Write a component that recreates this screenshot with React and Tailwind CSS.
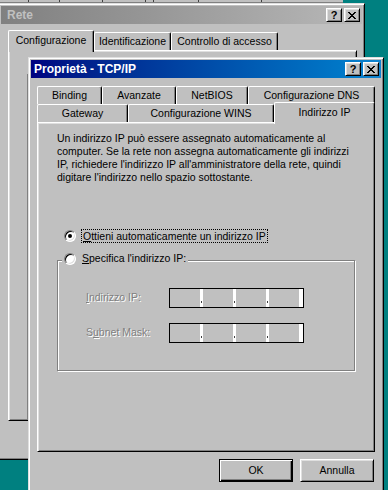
import React from 'react';

// Win98 bevels
const raised = 'border border-t-white border-l-white border-r-black border-b-black shadow-[inset_1px_1px_0_#dfdfdf,inset_-1px_-1px_0_#808080]';
const frame = 'border border-t-[#dfdfdf] border-l-[#dfdfdf] border-r-black border-b-black shadow-[inset_1px_1px_0_#fff,inset_-1px_-1px_0_#808080]';
const panel = 'border border-t-white border-l-white border-r-black border-b-black shadow-[inset_1px_1px_0_#dfdfdf,inset_-1px_-1px_0_#808080]';
const disabled = 'text-[#808080] [text-shadow:1px_1px_0_#fff]';

function CloseGlyph() {
  return (
    <svg width="8" height="7" viewBox="0 0 8 7" shapeRendering="crispEdges">
      <path
        fill="#000"
        d="M0 0h2v1H0zM6 0h2v1H6zM1 1h2v1H1zM5 1h2v1H5zM2 2h4v1H2zM3 3h2v1H3zM2 4h4v1H2zM1 5h2v1H1zM5 5h2v1H5zM0 6h2v1H0zM6 6h2v1H6z"
      />
    </svg>
  );
}

function TitleButtons() {
  return (
    <div className="flex gap-[2px] pr-[2px]">
      <div className={`w-[16px] h-[14px] bg-[#c0c0c0] ${raised} flex items-center justify-center text-[11px] font-bold leading-none text-black`}>?</div>
      <div className={`w-[16px] h-[14px] bg-[#c0c0c0] ${raised} flex items-center justify-center`}>
        <CloseGlyph />
      </div>
    </div>
  );
}

function Tab({ label, w, selected }) {
  if (selected) {
    return (
      <div
        className={`${w} h-[22px] -mb-[2px] relative z-10 bg-[#c0c0c0] border-t border-l border-white border-r border-r-black rounded-t-[2px] shadow-[inset_-1px_0_0_#808080] flex items-center justify-center pb-[2px]`}
      >
        {label}
      </div>
    );
  }
  return (
    <div
      className={`${w} h-[18px] bg-[#c0c0c0] border-t border-l border-white border-r border-r-black rounded-t-[2px] shadow-[inset_-1px_0_0_#808080] flex items-center justify-center`}
    >
      {label}
    </div>
  );
}

function Radio({ checked }) {
  return (
    <div className="w-[12px] h-[12px] rounded-full bg-white border border-t-[#808080] border-l-[#808080] border-r-white border-b-white shadow-[inset_1px_1px_0_#000,inset_-1px_-1px_0_#dfdfdf] flex items-center justify-center shrink-0">
      {checked && <div className="w-[4px] h-[4px] rounded-full bg-black" />}
    </div>
  );
}

function IpBox() {
  return (
    <div className="w-[135px] h-[20px] border border-black flex">
      {[30, 30, 30, 30].map((fw, i) => (
        <React.Fragment key={i}>
          <div style={{ width: fw }} className="h-full" />
          <div className={`${i === 3 ? 'w-[4px]' : 'w-[3px]'} h-full bg-white flex justify-center`}>
            {i < 3 && <div className="mt-[12px] w-[1px] h-[2px] bg-[#404040]" />}
          </div>
        </React.Fragment>
      ))}
    </div>
  );
}

export default function App() {
  return (
    <div className="relative w-[388px] h-[490px] overflow-hidden bg-[#008080] text-black font-['Liberation_Sans',Arial,sans-serif] text-[10.5px]">
      {/* bit of another window at the very top */}
      <div className="absolute left-0 top-0 w-[343px] h-[3px] bg-[#c0c0c0] border-b border-[#808080] flex">
        <div className="ml-[28px] w-[1px] h-full bg-[#404040]" />
        <div className="ml-[30px] w-[1px] h-full bg-[#404040]" />
        <div className="ml-[42px] w-[1px] h-full bg-[#404040]" />
        <div className="ml-[42px] w-[1px] h-full bg-[#404040]" />
        <div className="ml-[7px] w-[1px] h-full bg-[#404040]" />
        <div className="ml-[44px] w-[1px] h-full bg-[#404040]" />
        <div className="ml-[62px] w-[1px] h-full bg-[#404040]" />
      </div>

      {/* back window: Rete */}
      <div className={`absolute left-[-2px] top-[3px] w-[367px] h-[457px] bg-[#c0c0c0] ${frame} p-[2px]`}>
        <div className="h-[18px] bg-linear-to-r from-[#808080] to-[#b8b8b8] flex items-center justify-between">
          <span className="pl-[6px] text-[12px] font-bold text-[#c0c0c0]">Rete</span>
          <TitleButtons />
        </div>
        <div className="mt-[6px] pl-[7px] pr-[5px]">
          <div className="flex items-end h-[20px]">
            <Tab label="Configurazione" w="w-[86px]" selected />
            <Tab label="Identificazione" w="w-[77px]" />
            <Tab label="Controllo di accesso" w="w-[107px]" />
          </div>
          <div className={`h-[371px] ${panel} pl-[18px] pt-[23px] pb-[1px]`}>
            <div className="h-full border-l border-[#808080]" />
          </div>
        </div>
      </div>

      {/* front window: Proprietà - TCP/IP */}
      <div className={`absolute left-[28px] top-[57px] w-[356px] h-[445px] bg-[#c0c0c0] ${frame} p-[2px]`}>
        <div className="h-[18px] bg-linear-to-r from-[#000080] to-[#1084d0] flex items-center justify-between">
          <span className="pl-[3px] text-[12px] font-bold text-white">Proprietà - TCP/IP</span>
          <TitleButtons />
        </div>

        <div className="mt-[8px] px-[6px]">
          <div className="flex h-[18px]">
            <Tab label="Binding" w="w-[65px]" />
            <Tab label="Avanzate" w="w-[74px]" />
            <Tab label="NetBIOS" w="w-[72px]" />
            <Tab label="Configurazione DNS" w="w-[127px]" />
          </div>
          <div className="flex items-end h-[18px]">
            <Tab label="Gateway" w="w-[91px]" />
            <Tab label="Configurazione WINS" w="w-[146px]" />
            <Tab label="Indirizzo IP" w="w-[101px]" selected />
          </div>

          <div className={`h-[330px] ${panel} flex flex-col`}>
            <p className="pl-[19px] pt-[9px] leading-[13px] whitespace-nowrap">
              Un indirizzo IP può essere assegnato automaticamente al
              <br />
              computer. Se la rete non assegna automaticamente gli indirizzi
              <br />
              IP, richiedere l'indirizzo IP all'amministratore della rete, quindi
              <br />
              digitare l'indirizzo nello spazio sottostante.
            </p>

            <div className="mt-[45px] ml-[26px] h-[14px] flex items-center">
              <Radio checked />
              <span className="ml-[5px] px-[1px] border border-dotted border-black leading-[12px]">
                <u>O</u>ttieni automaticamente un indirizzo IP
              </span>
            </div>

            <div className="relative mt-[17px] mx-[19px] h-[111px] border border-[#808080] shadow-[1px_1px_0_#fff,inset_1px_1px_0_#fff] pt-[27px] pl-[28px] flex flex-col gap-[15px]">
              <div className="absolute left-[4px] top-[-9px] h-[14px] px-[2px] bg-[#c0c0c0] flex items-center">
                <Radio />
                <span className="ml-[6px]">
                  <u>S</u>pecifica l'indirizzo IP:
                </span>
              </div>
              <div className="flex items-center h-[20px]">
                <span className={`w-[83px] ${disabled}`}>
                  <u>I</u>ndirizzo IP:
                </span>
                <IpBox />
              </div>
              <div className="flex items-center h-[20px]">
                <span className={`w-[83px] ${disabled}`}>
                  S<u>u</u>bnet Mask:
                </span>
                <IpBox />
              </div>
            </div>
          </div>

          <div className="mt-[7px] flex justify-end gap-[7px] pr-[1px]">
            <button className="w-[74px] h-[23px] bg-[#c0c0c0] border border-black shadow-[inset_1px_1px_0_#fff,inset_-1px_-1px_0_#000,inset_-2px_-2px_0_#808080] text-[10.5px]">
              OK
            </button>
            <button className={`w-[74px] h-[23px] bg-[#c0c0c0] ${raised} text-[10.5px]`}>Annulla</button>
          </div>
        </div>
      </div>
    </div>
  );
}
